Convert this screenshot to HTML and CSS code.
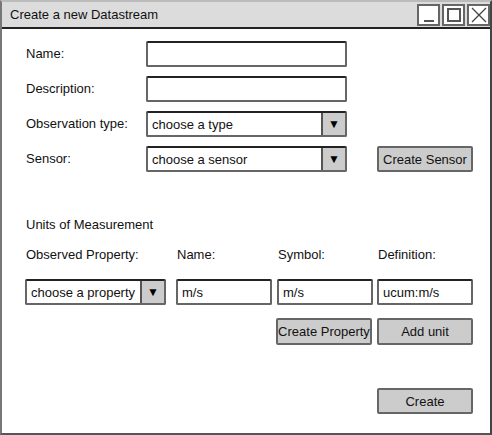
FILE: index.html
```html
<!DOCTYPE html>
<html>
<head>
<meta charset="utf-8">
<link rel="stylesheet" href="styles.css">
</head>
<body>
<div class="window">
  <div class="titlebar">
    <span class="title">Create a new Datastream</span>
    <div class="controls">
      <span class="ctl"><svg width="18" height="18" viewBox="0 0 18 18"><line x1="4" y1="15" x2="14" y2="15" stroke="#555" stroke-width="2"/></svg></span>
      <span class="ctl"><svg width="18" height="18" viewBox="0 0 18 18"><rect x="3" y="3" width="12" height="12" fill="none" stroke="#555" stroke-width="2"/></svg></span>
      <span class="ctl"><svg width="18" height="18" viewBox="0 0 18 18"><path d="M2 2 L16 16 M16 2 L2 16" stroke="#444" stroke-width="1.3"/></svg></span>
    </div>
  </div>
  <div class="content">
    <div class="form">
      <label>Name:</label>
      <div class="input"></div>
      <span></span><span></span>

      <label>Description:</label>
      <div class="input"></div>
      <span></span><span></span>

      <label>Observation type:</label>
      <div class="select"><span class="val">choose a type</span><span class="arrow">▼</span></div>
      <span></span><span></span>

      <label>Sensor:</label>
      <div class="select"><span class="val">choose a sensor</span><span class="arrow">▼</span></div>
      <span></span>
      <div class="btn">Create Sensor</div>
    </div>

    <div class="section">Units of Measurement</div>

    <div class="units">
      <div class="head">Observed Property:</div>
      <div class="head">Name:</div>
      <div class="head">Symbol:</div>
      <div class="head">Definition:</div>

      <div class="select prop"><span class="val">choose a property</span><span class="arrow">▼</span></div>
      <div class="input small"><span class="val">m/s</span></div>
      <div class="input small"><span class="val">m/s</span></div>
      <div class="input small"><span class="val">ucum:m/s</span></div>

      <span></span><span></span>
      <div class="btn tall shift">Create Property</div>
      <div class="btn tall">Add unit</div>
    </div>

    <div class="footer">
      <div class="btn">Create</div>
    </div>
  </div>
</div>
</body>
</html>
```

FILE: styles.css
```css
* { box-sizing: border-box; }
html, body { margin: 0; padding: 0; background: #fff; }
body {
  font-family: "Comic Sans MS", "Liberation Sans", Arial, sans-serif;
  font-size: 13px;
  color: #111;
}
.window {
  width: 492px;
  height: 435px;
  border: 2px solid #777;
  border-right-color: #444;
  border-bottom-color: #555;
  border-top-color: #bbb;
  display: flex;
  flex-direction: column;
}
.titlebar {
  height: 27px;
  background: #dcdcdc;
  border-bottom: 2px solid #222;
  display: flex;
  align-items: center;
  justify-content: space-between;
  padding-left: 8px;
  padding-right: 0;
}
.title { font-size: 13px; color: #111; }
.controls { display: flex; gap: 2px; margin-top: 1px; }
.ctl {
  width: 23px;
  height: 22px;
  border: 2px solid #666;
  background: #fff;
  display: flex;
  align-items: center;
  justify-content: center;
}
.content {
  padding: 12px 0 0 24px;
  flex: 1;
}
.form {
  display: grid;
  grid-template-columns: 120px 201px 30px 96px;
  grid-auto-rows: 26px;
  row-gap: 9px;
  align-items: center;
}
label { line-height: 20px; }
.input {
  height: 26px;
  border: 2px solid #666;
  border-top-color: #222;
  border-radius: 2px;
  background: #fff;
  display: flex;
  align-items: center;
  padding-left: 4px;
}
.select {
  height: 26px;
  border: 2px solid #666;
  border-top-color: #222;
  border-radius: 2px;
  background: #fff;
  display: flex;
  align-items: stretch;
}
.select .val {
  flex: 1;
  display: flex;
  align-items: center;
  padding-left: 4px;
}
.select .arrow {
  width: 24px;
  background: #cccccc;
  border-left: 2px solid #555;
  display: flex;
  align-items: center;
  justify-content: center;
  font-size: 12px;
  color: #000;
}
.btn {
  height: 26px;
  background: #cccccc;
  border: 2px solid #666;
  border-radius: 2px;
  display: flex;
  align-items: center;
  justify-content: center;
  white-space: nowrap;
}
.btn.tall { height: 27px; width: 96px; }
.btn.shift { margin-left: -1px; }
.section {
  margin-top: 43px;
  line-height: 20px;
}
.units {
  margin-top: 10px;
  margin-left: -1px;
  display: grid;
  grid-template-columns: 151px 101px 100px 96px;
  align-items: center;
}
.head { line-height: 20px; padding-left: 1px; }
.units .select, .units .input { margin-top: 14px; }
.prop { width: 141px; }
.small { width: 96px; }
.units .btn { margin-top: 13px; }
.footer {
  margin-top: 43px;
  padding-left: 351px;
}
.footer .btn { width: 96px; height: 26px; }
```
